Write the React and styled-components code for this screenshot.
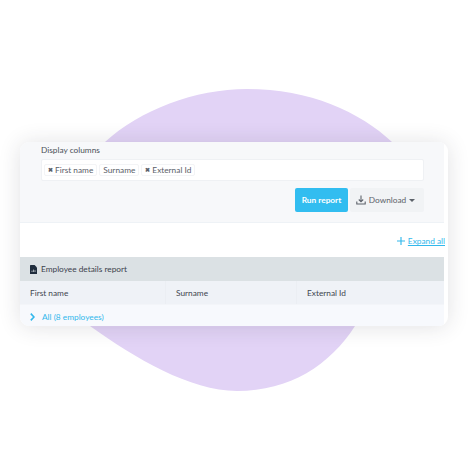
import React from "react";
import styled, { createGlobalStyle } from "styled-components";

const Global = createGlobalStyle`
  html, body { margin: 0; padding: 0; background: #fff; }
  * { box-sizing: border-box; }
`;

const Stage = styled.div`
  position: relative;
  width: 468px;
  height: 468px;
  padding: 142px 20px 0 20px;
  overflow: hidden;
  font-family: Lato, "Noto Sans", sans-serif;
  font-size: 8.3px;
  color: #3f4650;
`;

const Blob = styled.svg`
  position: absolute;
  left: 0;
  top: 0;
`;

const Card = styled.div`
  position: relative;
  width: 428px;
  height: 184px;
  background: #fff;
  border-radius: 9px;
  box-shadow: 0 1px 22px rgba(40, 40, 60, 0.14);
  overflow: hidden;
  display: flex;
  flex-direction: column;
  padding-right: 4px;
`;

const FilterPanel = styled.div`
  height: 81px;
  background: #f7f8fa;
  border-bottom: 1px solid #eef2f6;
  padding: 3px 20px 0 21px;
  display: flex;
  flex-direction: column;
`;

const FieldLabel = styled.div`
  font-size: 8.3px;
  line-height: 11px;
  color: #4a5058;
`;

const TagInput = styled.div`
  margin-top: 3px;
  height: 22px;
  background: #fff;
  border: 1px solid #eff1f4;
  border-radius: 2px;
  display: flex;
  align-items: center;
  gap: 2px;
  padding: 0 2px 1px;
`;

const Tag = styled.span`
  height: 12px;
  display: inline-flex;
  align-items: center;
  gap: 2px;
  padding: 0 3px;
  background: #fff;
  border: 1px solid #f3f4f6;
  border-radius: 2px;
  font-size: 8.3px;
  color: #5a6068;
`;

const TagX = styled.span`
  font-size: 6px;
  font-weight: 900;
  color: #5a6068;
  line-height: 1;
`;

const Actions = styled.div`
  margin-top: 7px;
  display: flex;
  justify-content: flex-end;
  gap: 2px;
`;

const RunButton = styled.button`
  width: 53px;
  height: 24px;
  border: none;
  border-radius: 2px;
  background: #32bdf0;
  color: #fff;
  font: 700 8.3px Lato, sans-serif;
  padding: 0;
`;

const DownloadButton = styled.button`
  width: 74px;
  height: 24px;
  border: none;
  border-radius: 2px;
  background: #f1f3f5;
  color: #5c626a;
  font: 8.3px Lato, sans-serif;
  display: flex;
  align-items: center;
  justify-content: center;
  gap: 3px;
  padding: 0 3px 0 0;
`;

const Caret = styled.span`
  width: 0;
  height: 0;
  border-left: 3px solid transparent;
  border-right: 3px solid transparent;
  border-top: 3px solid #5c626a;
`;

const ExpandRow = styled.div`
  height: 34px;
  display: flex;
  align-items: center;
  justify-content: flex-end;
  gap: 3px;
  padding-top: 2px;
  margin-right: -1px;
  color: #32b8ec;
`;

const ExpandLink = styled.a`
  font-size: 8.3px;
  color: #32b8ec;
  text-decoration: underline;
`;

const ReportHead = styled.div`
  height: 24px;
  background: #dbe1e4;
  display: flex;
  align-items: center;
  gap: 4px;
  padding-left: 10px;
  color: #3b424c;
`;

const ColumnRow = styled.div`
  height: 24px;
  background: #eff2f7;
  display: grid;
  grid-template-columns: 146px 131px 1fr;
  border-bottom: 1px solid #f3f5f9;
`;

const ColumnCell = styled.div`
  display: flex;
  align-items: center;
  padding-left: 10px;
  color: #40464f;
  border-right: 1px solid #ebeef3;
  &:last-child { border-right: none; }
`;

const AllRow = styled.div`
  flex: 1;
  background: #f7f9fd;
  display: flex;
  align-items: center;
  gap: 7px;
  padding: 2px 0 0 10px;
  color: #32b8ec;
`;

export default function App() {
  return (
    <Stage>
      <Global />
      <Blob width="468" height="468" viewBox="0 0 468 468">
        <path
          d="M247 89 C 310 89 360 112 392 142 C 412 162 420 200 405 245 C 392 285 372 305 355 326 C 330 365 290 391 237 391 C 190 391 135 358 90 326 C 55 300 45 250 60 215 C 70 190 85 160 105 142 C 140 110 195 89 247 89 Z"
          fill="#e2d3f6"
        />
      </Blob>
      <Card>
        <FilterPanel>
          <FieldLabel>Display columns</FieldLabel>
          <TagInput>
            <Tag><TagX>✖</TagX>First name</Tag>
            <Tag>Surname</Tag>
            <Tag><TagX>✖</TagX>External Id</Tag>
          </TagInput>
          <Actions>
            <RunButton>Run report</RunButton>
            <DownloadButton>
              <svg width="10" height="10" viewBox="0 0 10 10" fill="none" stroke="#5c626a" strokeWidth="1.1">
                <path d="M5 0.5V6.5M2.8 4.5L5 6.8L7.2 4.5M0.8 6.5V9H9.2V6.5" />
              </svg>
              Download
              <Caret />
            </DownloadButton>
          </Actions>
        </FilterPanel>
        <ExpandRow>
          <svg width="8" height="8" viewBox="0 0 9 9" stroke="#32b8ec" strokeWidth="1.3">
            <path d="M4.5 0V9M0 4.5H9" />
          </svg>
          <ExpandLink>Expand all</ExpandLink>
        </ExpandRow>
        <ReportHead>
          <svg width="7" height="9" viewBox="0 0 7 9">
            <path d="M0.6 0H4.6L7 2.4V8.4Q7 9 6.4 9H0.6Q0 9 0 8.4V0.6Q0 0 0.6 0Z" fill="#1f2d3d" />
            <path d="M2 7V5.6M3.5 7V4.6M5 7V5.2" stroke="#dbe1e4" strokeWidth="0.7" />
          </svg>
          Employee details report
        </ReportHead>
        <ColumnRow>
          <ColumnCell>First name</ColumnCell>
          <ColumnCell>Surname</ColumnCell>
          <ColumnCell>External Id</ColumnCell>
        </ColumnRow>
        <AllRow>
          <svg width="5" height="8" viewBox="0 0 5 8" fill="none" stroke="#32b8ec" strokeWidth="1.6">
            <path d="M0.8 0.6L4 4L0.8 7.4" />
          </svg>
          All (8 employees)
        </AllRow>
      </Card>
    </Stage>
  );
}
